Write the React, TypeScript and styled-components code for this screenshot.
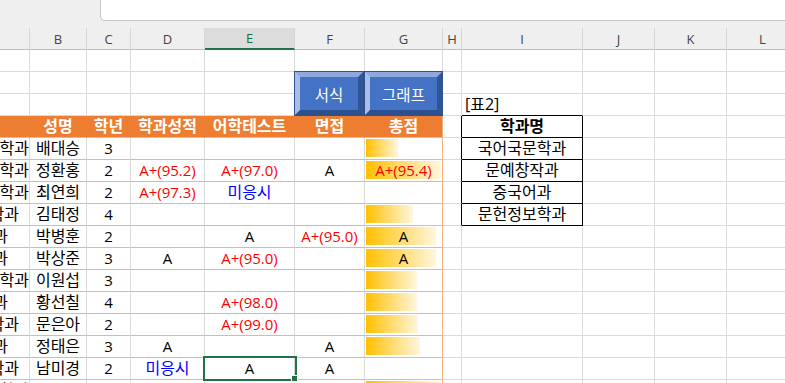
import React from 'react';
import styled, { createGlobalStyle } from 'styled-components';

const GlobalStyle = createGlobalStyle`
  html, body { margin: 0; padding: 0; background: #ffffff; overflow: hidden; }
  #root { width: 785px; height: 383px; overflow: hidden; }
`;

const FONT = `"Open Sans", "Noto Sans CJK KR", sans-serif`;
const ORANGE = '#ED7D31';
const ORANGE_LINE = '#F4B183';
const GRID = '#dadada';
const BLACK = '#000000';

const COL_WIDTHS = [30, 57, 44, 74, 90, 70, 78, 19, 121, 72, 72, 72];
const COL_LETTERS = ['', 'B', 'C', 'D', 'E', 'F', 'G', 'H', 'I', 'J', 'K', 'L'];
const TEMPLATE = COL_WIDTHS.map((w) => `${w}px`).join(' ');
const ACTIVE_COL = 4;

const Window = styled.div`
  width: 785px;
  height: 383px;
  overflow: hidden;
  background: #efefef;
  display: flex;
  flex-direction: column;
  font-family: ${FONT};
`;

const TopBar = styled.div`
  flex: none;
  height: 28px;
  padding-left: 100px;
  box-sizing: border-box;
  display: flex;
  align-items: flex-start;
`;

const FormulaBox = styled.div`
  flex: 1;
  height: 21px;
  box-sizing: border-box;
  background: #ffffff;
  border-left: 1px solid #c6c6c6;
  border-bottom: 1px solid #c6c6c6;
  border-bottom-left-radius: 5px;
`;

const HeaderRow = styled.div`
  flex: none;
  display: grid;
  grid-template-columns: ${TEMPLATE};
  height: 22px;
`;

const ColHead = styled.div<{ $active?: boolean }>`
  box-sizing: border-box;
  display: flex;
  align-items: center;
  justify-content: center;
  font-size: 13px;
  color: ${(p) => (p.$active ? '#1d6b40' : '#444444')};
  background: ${(p) => (p.$active ? '#dcdcdc' : '#efefef')};
  border-right: 1px solid #d6d6d6;
  border-bottom: ${(p) => (p.$active ? '2px solid #217346' : '1px solid #bdbdbd')};
`;

const SheetArea = styled.div`
  position: relative;
  flex: 1;
  background: #ffffff;
  overflow: hidden;
`;

const Grid = styled.div`
  display: grid;
  grid-template-columns: ${TEMPLATE};
  grid-auto-rows: 22px;
`;

type Align = 'left' | 'center' | 'right';

const Cell = styled.div<{
  $right: string;
  $bottom: string;
  $bg: string;
  $color: string;
  $bold: boolean;
  $align: Align;
  $padRight: number;
  $hangul: boolean;
}>`
  box-sizing: border-box;
  min-width: 0;
  overflow: hidden;
  white-space: nowrap;
  display: flex;
  align-items: center;
  justify-content: ${(p) => (p.$align === 'left' ? 'flex-start' : p.$align === 'right' ? 'flex-end' : 'center')};
  padding: 0 ${(p) => p.$padRight}px 0 ${(p) => (p.$align === 'left' ? 3 : 0)}px;
  font-size: ${(p) => (p.$hangul ? 16 : 15)}px;
  line-height: 21px;
  font-weight: ${(p) => (p.$bold ? 700 : 400)};
  color: ${(p) => p.$color};
  background-color: ${(p) => p.$bg};
  border-right: 1px solid ${(p) => p.$right};
  border-bottom: 1px solid ${(p) => p.$bottom};
`;

const BarCell = styled(Cell)`
  background-image: linear-gradient(90deg, #ffc000 0%, #ffd966 45%, #fff6de 100%);
  background-repeat: no-repeat;
  background-position: 1px 1px;
`;

const ShapeButton = styled.div<{ $left: number; $width: number }>`
  position: absolute;
  top: 21px;
  left: ${(p) => p.$left}px;
  width: ${(p) => p.$width}px;
  height: 45px;
  box-sizing: border-box;
  border: 1px solid #2f528f;
`;

const Bevel = styled.div`
  height: 100%;
  box-sizing: border-box;
  border-style: solid;
  border-width: 5px;
  border-color: #8eaadc #2f5597 #2c4f8e #a9bde6;
  background: #4472c4;
  color: #ffffff;
  font-family: "Noto Sans CJK KR", sans-serif;
  font-size: 15.5px;
  display: flex;
  align-items: center;
  justify-content: center;
`;

const Selection = styled.div`
  position: absolute;
  left: 203px;
  top: 306px;
  width: 94px;
  height: 25px;
  box-sizing: border-box;
  border: 2px solid #217346;
  pointer-events: none;
`;

const FillHandle = styled.span`
  position: absolute;
  right: -3px;
  bottom: -3px;
  width: 7px;
  height: 7px;
  box-sizing: border-box;
  background: #217346;
  border: 1px solid #ffffff;
`;

type CellSpec = {
  text?: string;
  color?: string;
  bold?: boolean;
  bg?: string;
  right?: string;
  bottom?: string;
  align?: Align;
  padRight?: number;
  bar?: number;
};

type Rec = {
  dept: string;
  pad: number;
  name: string;
  grade: string;
  d?: string;
  e?: string;
  f?: string;
  g?: string;
  bar: number;
};

const records: Rec[] = [
  { dept: '국어국문학과', pad: 0, name: '배대승', grade: '3', bar: 32 },
  { dept: '국어국문학과', pad: 0, name: '정환홍', grade: '2', d: 'A+(95.2)', e: 'A+(97.0)', f: 'A', g: 'A+(95.4)', bar: 75 },
  { dept: '문헌정보학과', pad: 0, name: '최연희', grade: '2', d: 'A+(97.3)', e: '미응시', bar: 0 },
  { dept: '문예창작과', pad: 10, name: '김태정', grade: '4', bar: 47 },
  { dept: '중국어과', pad: 21, name: '박병훈', grade: '2', e: 'A', f: 'A+(95.0)', g: 'A', bar: 70 },
  { dept: '중국어과', pad: 21, name: '박상준', grade: '3', d: 'A', e: 'A+(95.0)', g: 'A', bar: 70 },
  { dept: '국어국문학과', pad: 0, name: '이원섭', grade: '3', bar: 51 },
  { dept: '중국어과', pad: 21, name: '황선칠', grade: '4', e: 'A+(98.0)', bar: 51 },
  { dept: '문예창작과', pad: 10, name: '문은아', grade: '2', e: 'A+(99.0)', bar: 52 },
  { dept: '중국어과', pad: 21, name: '정태은', grade: '3', d: 'A', f: 'A', bar: 54 },
  { dept: '문예창작과', pad: 10, name: '남미경', grade: '2', d: '미응시', e: 'A', f: 'A', bar: 0 },
  { dept: '국어국문학과', pad: 0, name: '', grade: '', bar: 75 },
];

const deptList = ['국어국문학과', '문예창작과', '중국어과', '문헌정보학과'];
const headers = ['', '성명', '학년', '학과성적', '어학테스트', '면접', '총점'];

const toneOf = (v: string) => (v.startsWith('A+') ? '#ff0000' : v === '미응시' ? '#0000ff' : '#000000');
const hasHangul = (v?: string) => !!v && /[\uAC00-\uD7A3]/.test(v);

function buildRows(): CellSpec[][] {
  const rows: CellSpec[][] = [];
  const blank = (): CellSpec[] => COL_WIDTHS.map(() => ({}));

  rows.push(blank());
  rows.push(blank());

  const r3 = blank();
  r3[8] = { text: '[표2]', align: 'left', bottom: BLACK };
  rows.push(r3);

  const r4 = blank();
  headers.forEach((h, i) => {
    r4[i] = {
      text: h,
      bold: true,
      color: '#ffffff',
      bg: ORANGE,
      right: i === 6 ? ORANGE_LINE : ORANGE,
      bottom: ORANGE_LINE,
    };
  });
  r4[7] = { right: BLACK };
  r4[8] = { text: '학과명', bold: true, right: BLACK, bottom: BLACK };
  rows.push(r4);

  records.forEach((rec, idx) => {
    const r = blank();
    const vals = [rec.dept, rec.name, rec.grade, rec.d ?? '', rec.e ?? '', rec.f ?? '', rec.g ?? ''];
    vals.forEach((v, i) => {
      r[i] = {
        text: v,
        color: toneOf(v),
        bottom: ORANGE_LINE,
        right: i === 6 ? ORANGE_LINE : GRID,
      };
    });
    r[0].align = 'right';
    r[0].padRight = rec.pad;
    r[6].bar = rec.bar;
    if (idx < 4) {
      r[7] = { right: BLACK };
      r[8] = { text: deptList[idx], right: BLACK, bottom: BLACK };
    }
    rows.push(r);
  });

  return rows;
}

const rows = buildRows();

export default function App() {
  return (
    <>
      <GlobalStyle />
      <Window>
        <TopBar>
          <FormulaBox />
        </TopBar>
        <HeaderRow>
          {COL_LETTERS.map((l, i) => (
            <ColHead key={i} $active={i === ACTIVE_COL}>
              {l}
            </ColHead>
          ))}
        </HeaderRow>
        <SheetArea>
          <Grid>
            {rows.map((row, ri) =>
              row.map((c, ci) => {
                const common = {
                  $right: c.right ?? GRID,
                  $bottom: c.bottom ?? GRID,
                  $bg: c.bg ?? 'transparent',
                  $color: c.color ?? '#000000',
                  $bold: !!c.bold,
                  $align: c.align ?? 'center',
                  $padRight: c.padRight ?? 0,
                  $hangul: hasHangul(c.text),
                };
                if (c.bar && c.bar > 0) {
                  return (
                    <BarCell key={`${ri}-${ci}`} {...common} style={{ backgroundSize: `${c.bar}px 18px` }}>
                      {c.text}
                    </BarCell>
                  );
                }
                return (
                  <Cell key={`${ri}-${ci}`} {...common}>
                    {c.text}
                  </Cell>
                );
              })
            )}
          </Grid>
          <ShapeButton $left={294} $width={70}>
            <Bevel>서식</Bevel>
          </ShapeButton>
          <ShapeButton $left={364} $width={79}>
            <Bevel>그래프</Bevel>
          </ShapeButton>
          <Selection>
            <FillHandle />
          </Selection>
        </SheetArea>
      </Window>
    </>
  );
}
